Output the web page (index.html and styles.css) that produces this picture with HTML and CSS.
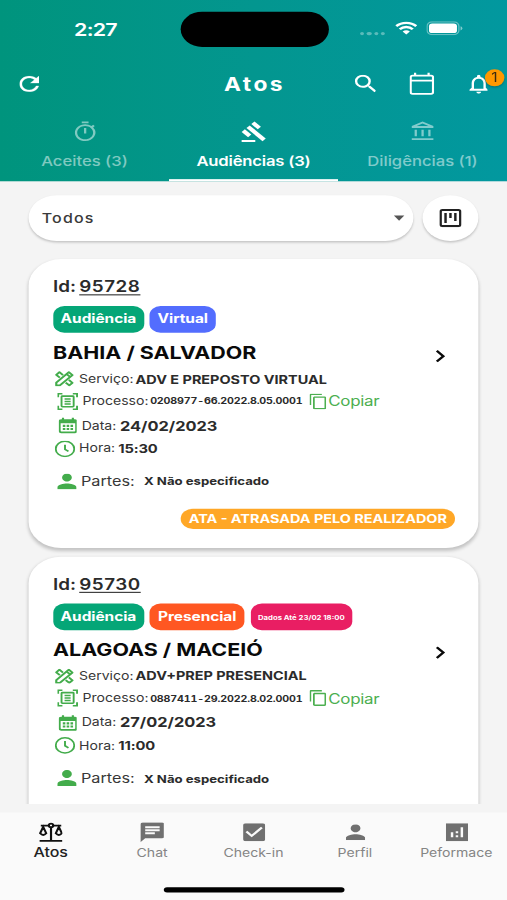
FILE: index.html
```html
<!DOCTYPE html>
<html lang="pt-BR">
<head>
<meta charset="utf-8">
<title>Atos</title>
<link rel="stylesheet" href="styles.css">
</head>
<body>
<svg width="0" height="0" class="defs">
  <symbol id="tools" viewBox="1.500 1.500 21 21"><g fill="none" stroke="currentColor" stroke-width="2.400" stroke-linejoin="round"><path d="M3 17 17 3l4 4L7 21H3z"/><path d="M10.500 7 6.500 3 3 6.500l4 4M17 13.500l4 4-3.500 3.500-4-4M14.500 5.500l4 4"/></g></symbol>
  <symbol id="process" viewBox="0 0 24 24"><g fill="none" stroke="currentColor" stroke-width="2.200"><path d="M1.100 6V1.100H6M18 1.100h4.900V6M22.900 18v4.900H18M6 22.900H1.100V18"/><rect x="5" y="4.500" width="14" height="15" rx="1"/><path d="M8.500 8.500h7M8.500 12h7M8.500 15.500h7"/></g></symbol>
  <symbol id="date" viewBox="1 1 22 22"><path fill="currentColor" fill-rule="evenodd" d="M5 1h2.500v2h9V1H19v2h1a3 3 0 0 1 3 3v14a3 3 0 0 1-3 3H4a3 3 0 0 1-3-3V6a3 3 0 0 1 3-3h1zM3.500 9v10.500q0 1 1 1h15q1 0 1-1V9zM6 11h3v3H6zm4.500 0h3v3h-3zm4.500 0h3v3h-3zM6 15.500h3v3H6zm4.500 0h3v3h-3zm4.500 0h3v3h-3z"/></symbol>
  <symbol id="clock" viewBox="0 0 24 24"><g fill="none" stroke="currentColor" stroke-width="2.200"><circle cx="12" cy="12" r="10.700"/><path d="M12 6v6.500l4 3"/></g></symbol>
  <symbol id="person" viewBox="4 4 16 16"><path fill="currentColor" d="M12 12c2.210 0 4-1.790 4-4s-1.790-4-4-4-4 1.790-4 4 1.790 4 4 4zm0 2c-2.670 0-8 1.340-8 4v2h16v-2c0-2.660-5.330-4-8-4z"/></symbol>
  <symbol id="copy" viewBox="2 1 19 22"><path fill="currentColor" d="M16 1H4c-1.100 0-2 .9-2 2v14h2V3h12V1zm3 4H8c-1.100 0-2 .9-2 2v14c0 1.100.9 2 2 2h11c1.100 0 2-.9 2-2V7c0-1.100-.9-2-2-2zm0 16H8V7h11v14z"/></symbol>
  <symbol id="chevron" viewBox="0 0 8 12"><path fill="none" stroke="currentColor" stroke-width="2" d="M1 1l5 5-5 5"/></symbol>
</svg>
<div class="app">
  <header class="header">
    <div class="status">
      <span class="time">2:27</span>
      <span class="island"></span>
      <span class="dots"><i></i><i></i><i></i><i></i></span>
      <svg class="wifi" viewBox="0 0 17 12"><g fill="none" stroke="#fff" stroke-width="2.200"><path d="M.8 4.300a11 11 0 0 1 15.400 0"/><path d="M3.500 7.200a7 7 0 0 1 10 0"/></g><path fill="#fff" d="M5.700 9.400a4 4 0 0 1 5.600 0L8.500 12z"/></svg>
      <svg class="battery" viewBox="0 0 28 13"><rect x=".5" y=".5" width="24.500" height="12" rx="3.800" fill="none" stroke="#fff" stroke-opacity=".4"/><rect x="2" y="2" width="21.500" height="9" rx="2.500" fill="#fff"/><path d="M26.300 4.500v4q1.400-.6 1.400-2t-1.400-2" fill="#fff" fill-opacity=".5"/></svg>
    </div>
    <div class="bar">
      <svg class="refresh" viewBox="4 4 16 16"><path fill="#fff" stroke="#fff" stroke-width=".3" d="M17.650 6.350C16.200 4.900 14.210 4 12 4c-4.420 0-7.990 3.580-7.990 8s3.570 8 7.990 8c3.730 0 6.840-2.550 7.730-6h-2.080c-.82 2.330-3.040 4-5.650 4-3.310 0-6-2.690-6-6s2.690-6 6-6c1.660 0 3.140.69 4.220 1.780L13 11h7V4l-2.350 2.350z"/></svg>
      <h1 class="title">Atos</h1>
      <svg class="search" viewBox="3 3 17.500 17.500"><path fill="#fff" d="M15.500 14h-.79l-.28-.27A6.471 6.471 0 0 0 16 9.500 6.500 6.500 0 1 0 9.500 16c1.610 0 3.090-.59 4.230-1.570l.27.280v.79l5 4.990L20.490 19l-4.990-5zm-6 0C7.010 14 5 11.990 5 9.500S7.010 5 9.500 5 14 7.010 14 9.500 11.990 14 9.500 14z"/></svg>
      <svg class="calendar" viewBox="0 0 19 21"><path fill="none" stroke="#fff" stroke-width="1.700" d="M2.400 3h14.200q1.500 0 1.500 1.500v13.800q0 1.700-1.500 1.700H2.400Q.9 20 .9 18.300V4.500Q.9 3 2.400 3zM.9 7.600h17.200M4.300 0v3.500M14.700 0v3.500"/></svg>
      <span class="bell">
        <svg viewBox="4 2.500 16 19.500"><path fill="#fff" d="M12 22c1.100 0 2-.9 2-2h-4c0 1.100.9 2 2 2zm6-6v-5c0-3.070-1.630-5.640-4.500-6.320V4c0-.83-.67-1.500-1.500-1.500s-1.500.67-1.500 1.500v.68C7.640 5.360 6 7.920 6 11v5l-2 2v1h16v-1l-2-2zm-2 1H8v-6c0-2.480 1.510-4.500 4-4.500s4 2.020 4 4.500v6z"/></svg>
        <b class="badge">1</b>
      </span>
    </div>
    <nav class="tabs">
      <div class="tab">
        <svg viewBox="0 0 24 24"><path fill="currentColor" d="M15 1H9v2h6V1zm-4 13h2V8h-2v6zm8.030-6.610 1.420-1.420c-.43-.51-.9-.99-1.410-1.410l-1.420 1.420A8.962 8.962 0 0 0 12 4c-4.970 0-9 4.030-9 9s4.020 9 9 9a8.994 8.994 0 0 0 7.030-14.610zM12 20c-3.870 0-7-3.130-7-7s3.130-7 7-7 7 3.130 7 7-3.130 7-7 7z"/></svg>
        <span>Aceites (3)</span>
      </div>
      <div class="tab active">
        <svg viewBox="0 0 24 24"><g fill="currentColor"><path d="M1 21h12v2H1z"/><path d="M5.240 8.070l2.830-2.830 14.140 14.140-2.830 2.830z"/><path d="M12.320 1l5.660 5.660-2.830 2.830-5.660-5.660z"/><path d="M3.830 9.480l5.660 5.660-2.830 2.830L1 12.310z"/></g></svg>
        <span>Audiências (3)</span>
      </div>
      <div class="tab">
        <svg viewBox="0 0 24 24"><path fill="currentColor" d="M6.500 10h-2v7h2v-7zm6 0h-2v7h2v-7zm8.500 9H2v2h19v-2zm-2.500-9h-2v7h2v-7zm-7-6.740L16.710 6H6.290l5.210-2.740m0-2.260L2 6v2h19V6l-9.500-5z"/></svg>
        <span>Diligências (1)</span>
      </div>
    </nav>
  </header>

  <main class="content">
    <div class="filters">
      <div class="select"><span>Todos</span><i class="caret"></i></div>
      <div class="board"><svg viewBox="0 0 18 18"><rect x="1" y="1" width="16" height="16" rx="1.500" fill="none" stroke="currentColor" stroke-width="2"/><path fill="currentColor" d="M4 4h2v10H4zM8 4h2v5H8zM12 4h2v8h-2z"/></svg></div>
    </div>

    <article class="card">
      <div class="id">Id: <u>95728</u></div>
      <div class="chips"><span class="chip green">Audiência</span><span class="chip blue">Virtual</span></div>
      <div class="city"><span>BAHIA / SALVADOR</span><svg><use href="#chevron"/></svg></div>
      <div class="row service"><svg><use href="#tools"/></svg><span>Serviço:</span><b>ADV E PREPOSTO VIRTUAL</b></div>
      <div class="row process"><svg><use href="#process"/></svg><span>Processo:</span><b>0208977-66.2022.8.05.0001</b><a class="copy"><svg><use href="#copy"/></svg>Copiar</a></div>
      <div class="row date"><svg><use href="#date"/></svg><span>Data:</span><b>24/02/2023</b></div>
      <div class="row hour"><svg><use href="#clock"/></svg><span>Hora:</span><b>15:30</b></div>
      <div class="row parts"><svg><use href="#person"/></svg><span>Partes:</span><b>X Não especificado</b></div>
      <div class="state"><span>ATA - ATRASADA PELO REALIZADOR</span></div>
    </article>

    <article class="card">
      <div class="id">Id: <u>95730</u></div>
      <div class="chips"><span class="chip green">Audiência</span><span class="chip orange">Presencial</span><span class="chip pink">Dados Até 23/02 18:00</span></div>
      <div class="city"><span>ALAGOAS / MACEIÓ</span><svg><use href="#chevron"/></svg></div>
      <div class="row service"><svg><use href="#tools"/></svg><span>Serviço:</span><b>ADV+PREP PRESENCIAL</b></div>
      <div class="row process"><svg><use href="#process"/></svg><span>Processo:</span><b>0887411-29.2022.8.02.0001</b><a class="copy"><svg><use href="#copy"/></svg>Copiar</a></div>
      <div class="row date"><svg><use href="#date"/></svg><span>Data:</span><b>27/02/2023</b></div>
      <div class="row hour"><svg><use href="#clock"/></svg><span>Hora:</span><b>11:00</b></div>
      <div class="row parts"><svg><use href="#person"/></svg><span>Partes:</span><b>X Não especificado</b></div>
    </article>
  </main>

  <footer class="footer">
    <nav class="menu">
      <div class="item current"><svg viewBox="0 0 20 20"><g fill="none" stroke="currentColor" stroke-width="1.800"><path d="M.5 18.800h19M10 4.500v14M1.500 3.200H8M12 3.200h6.500"/><circle cx="10" cy="3" r="1.800"/><path d="M3.500 4.500 1 11q2.500 3.500 5 0zM16.500 4.500 14 11q2.500 3.500 5 0z"/></g></svg><span>Atos</span></div>
      <div class="item"><svg viewBox="2 2 20 20"><path fill="currentColor" d="M20 2H4c-1.100 0-1.990.9-1.990 2L2 22l4-4h14c1.100 0 2-.9 2-2V4c0-1.100-.9-2-2-2zM6 9h12v2H6V9zm8 5H6v-2h8v2zm4-6H6V6h12v2z"/></svg><span>Chat</span></div>
      <div class="item"><svg class="s18" viewBox="3 3 18 18"><path fill="currentColor" d="M19 3H5c-1.110 0-2 .9-2 2v14c0 1.100.89 2 2 2h14c1.110 0 2-.9 2-2V5c0-1.100-.89-2-2-2zm-9 14l-5-5 1.410-1.410L10 14.170l7.590-7.590L19 8l-9 9z"/></svg><span>Check-in</span></div>
      <div class="item"><svg class="s16"><use href="#person"/></svg><span>Perfil</span></div>
      <div class="item"><svg class="s18" viewBox="0 0 18 18"><path fill="currentColor" fill-rule="evenodd" d="M0 0h18v18H0zM4 9v5h2V9zm4 3v2h2v-2zm0-4v2h2V8zm4-4v10h2V4z"/></svg><span>Peformace</span></div>
    </nav>
    <div class="home"></div>
  </footer>
</div>
</body>
</html>
```
FILE: styles.css
```css
* { box-sizing: border-box; }
body { margin: 0; width: 507px; height: 900px; overflow: hidden; background: #f4f4f4; }
svg { display: block; flex: none; }
.defs { position: absolute; }

/* A 390x844 phone layout, stretched to fill the window */
.app {
  width: 390px; height: 844px;
  display: flex; flex-direction: column;
  transform: scale(1.3, 1.06635); transform-origin: 0 0;
  font-family: Inter, "Liberation Sans", sans-serif;
  color: #2b2b2b; background: #f4f4f4; white-space: nowrap;
}

.header { height: 170px; flex: none; color: #fff; background: linear-gradient(90deg, #00947d, #03968f 50%, #02989f); }
.status { height: 55px; display: flex; }
.time { width: 138.500px; padding: 17.500px 0 0 57px; font-size: 16.500px; line-height: 20px; font-weight: 600; letter-spacing: -.6px; }
.island { width: 114px; height: 33px; margin-top: 11.200px; border-radius: 17px; background: #000; }
.dots { display: flex; gap: 2.100px; margin: 29.700px 7px 0 24.500px; }
.dots i { width: 3.300px; height: 3.300px; border-radius: 50%; background: #fff; opacity: .35; }
.wifi { width: 17px; height: 12.500px; margin: 20px 6.500px 0 .7px; }
.battery { width: 28px; height: 13px; margin-top: 20.400px; }

.bar { height: 48px; display: flex; align-items: center; padding: 0 0 1px 15px; }
.refresh { width: 15px; height: 15.500px; }
.title { width: 100.400px; margin: 0 0 0 142.300px; font-size: 17.500px; font-weight: 700; letter-spacing: 1.900px; }
.search { width: 16.500px; height: 16.500px; }
.calendar { width: 19px; height: 21px; margin-left: 25.600px; }
.bell { position: relative; margin-left: 27px; }
.bell svg { width: 14.500px; height: 18px; }
.badge { position: absolute; left: 12px; top: -4.800px; width: 15px; height: 16px; border-radius: 50%; background: #ff9800; color: #3a2a10; font-size: 12px; line-height: 16px; font-weight: 400; text-align: center; box-shadow: 0 1px 2px #0004; }

.tabs { display: grid; grid-template-columns: repeat(3, 1fr); height: 67px; }
.tab { display: flex; flex-direction: column; align-items: center; padding-top: 9.500px; color: #ffffff80; border-bottom: 2px solid transparent; font-size: 12.800px; font-weight: 500; }
.tab.active { color: #fff; border-color: #fff; font-weight: 600; letter-spacing: -.15px; }
.tab svg { width: 21px; height: 21px; }
.tab span { margin-top: 10.200px; line-height: 16px; }

.content { height: 584px; flex: none; overflow: hidden; padding: 13px 21.800px 0 22.300px; }
.filters { display: flex; justify-content: space-between; margin-bottom: 17px; }
.select, .board { height: 43px; background: #fff; border-radius: 22px; box-shadow: 0 1.500px 2px #0003; display: flex; align-items: center; }
.select { width: 295.300px; justify-content: space-between; padding: 0 7px 0 9.800px; color: #3a3a3a; font-size: 12.300px; font-weight: 500; letter-spacing: .9px; }
.select span { margin-top: -1px; }
.caret { border: 4.300px solid transparent; border-top: 5px solid #555; border-bottom: 0; }
.board { width: 43.500px; justify-content: center; color: #222; }
.board svg { width: 17px; height: 17px; }

.card { height: 271px; margin-bottom: 7.500px; padding: 14px 18px 0 18.500px; background: #fff; border-radius: 25px; box-shadow: 0 2px 3px #0003; }
.id { height: 24px; line-height: 24.500px; font-size: 14.500px; font-weight: 600; word-spacing: -1.200px; }
.id u { text-underline-offset: 2px; text-decoration-thickness: 1.200px; letter-spacing: .4px; }
.chips { display: flex; gap: 4.500px; margin: 6px 0 0 0; }
.chip { height: 25px; line-height: 24.300px; text-align: center; border-radius: 8.500px; color: #fff; font-size: 11.900px; font-weight: 700; letter-spacing: -.05px; }
.green { background: #05a677; width: 69.800px; }
.blue { background: #536dfe; width: 51px; }
.orange { background: #ff5722; width: 73.200px; }
.pink { background: #e91e63; width: 78px; font-size: 5.950px; line-height: 25px; letter-spacing: 0; }
.city { height: 37px; display: flex; align-items: center; justify-content: space-between; color: #0a0a0a; font-size: 16.500px; font-weight: 700; }
.city svg { width: 8px; height: 12px; margin: 6px 6.800px 0 0; }
.row { display: flex; align-items: center; color: #2b2b2b; }
.row > svg { color: #43ac4b; }
.row > span { color: #383838; }
.row b { font-weight: 700; }
.service { height: 13px; font-size: 10.800px; padding-left: 1.500px; }
.service svg { width: 15px; height: 14.500px; }
.service span { width: 43.500px; margin-left: 3.500px; }
.service b { font-size: 11.100px; }
.process { height: 28px; font-size: 10.800px; padding-left: 3.500px; }
.process > svg { width: 16px; height: 17px; }
.process span { width: 52px; margin-left: 3.200px; }
.process b { width: 122.500px; font-size: 8.200px; font-variant-numeric: tabular-nums; letter-spacing: -.11px; }
.copy { display: flex; align-items: center; gap: 1.600px; color: #4caf50; font-size: 13px; letter-spacing: -.25px; }
.copy svg { width: 13px; height: 15px; }
.date { height: 18px; font-size: 10.800px; padding-left: 4px; }
.date svg { width: 14.500px; height: 16px; }
.date span { width: 29.500px; margin-left: 3.500px; }
.date b { font-size: 12.600px; }
.hour { height: 25px; font-size: 10.800px; padding-left: 1px; }
.hour svg { width: 16px; height: 16px; }
.hour span { width: 30.200px; margin-left: 3px; }
.hour b { font-size: 11.300px; letter-spacing: -.1px; }
.parts { height: 36px; font-size: 12.500px; padding-left: 3px; }
.parts svg { width: 15px; height: 15px; }
.parts span { width: 48.500px; margin-left: 3.500px; }
.parts b { font-size: 10.150px; }
.state { height: 35px; display: flex; align-items: center; justify-content: flex-end; }
.state span { width: 211.500px; height: 18.300px; line-height: 18.500px; border-radius: 9.500px; background: #ffa726; color: #fff; font-size: 11.100px; font-weight: 700; text-align: center; }

.footer { flex: none; height: 82px; margin-top: 8px; background: #fafafa; }
.menu { height: 70px; display: grid; grid-template-columns: repeat(5, 1fr); }
.item { display: flex; flex-direction: column; align-items: center; padding-top: 8.500px; color: #707070; font-size: 10.800px; }
.item span { color: #858585; line-height: 16px; margin-top: 3px; }
.item.current { color: #111; font-size: 12.300px; font-weight: 500; }
.item svg { width: 18.500px; height: 19px; }
.item .s18 { width: 17px; height: 17px; margin: 1px; }
.item .s16 { width: 15px; height: 15px; margin: 2px; }
.item.current span { color: #222; margin-top: 2px; }
.home { width: 139px; height: 5px; margin: 0 auto; border-radius: 3px; background: #000; }
```
